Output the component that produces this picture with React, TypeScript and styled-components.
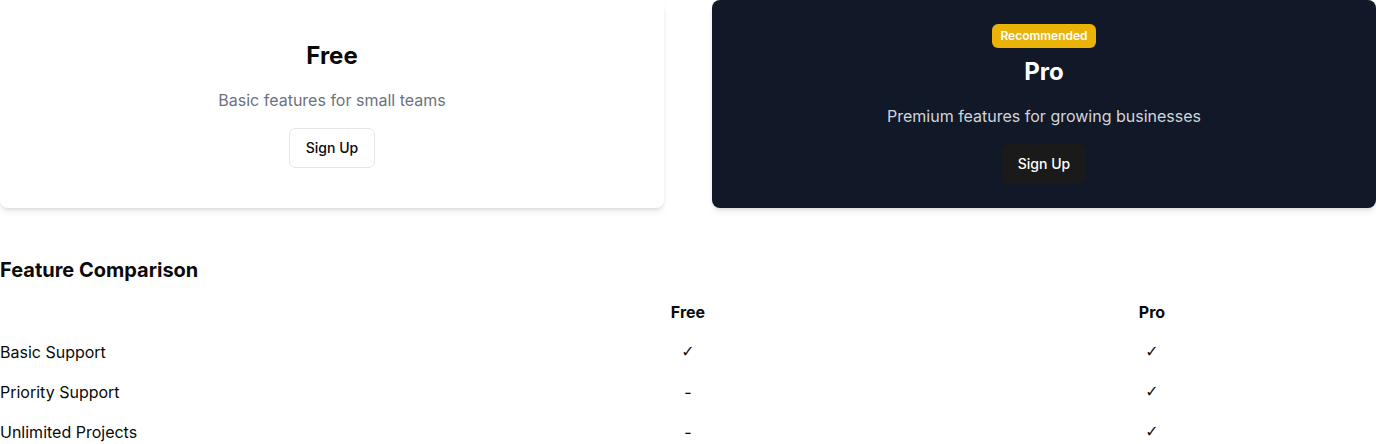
import React from "react";
import styled, { createGlobalStyle } from "styled-components";

const GlobalStyle = createGlobalStyle`
  html, body {
    margin: 0;
    padding: 0;
    background: #ffffff;
  }
  body {
    font-family: Inter, "Noto Sans", sans-serif;
    color: #0a0a0a;
  }
  * { box-sizing: border-box; }
`;

const Page = styled.div`
  width: 1376px;
`;

const CardGrid = styled.div`
  display: grid;
  grid-template-columns: 1fr 1fr;
  gap: 48px;
`;

const Card = styled.div<{ $dark?: boolean }>`
  display: flex;
  flex-direction: column;
  align-items: center;
  justify-content: center;
  padding: 24px;
  border-radius: 8px;
  text-align: center;
  background: ${(p) => (p.$dark ? "#111827" : "#ffffff")};
  color: ${(p) => (p.$dark ? "#ffffff" : "#0a0a0a")};
  box-shadow: 0 4px 6px -1px rgba(0, 0, 0, 0.1), 0 2px 4px -2px rgba(0, 0, 0, 0.1);
`;

const Badge = styled.span`
  display: inline-block;
  background: #eab308;
  color: #ffffff;
  font-size: 12px;
  line-height: 16px;
  font-weight: 600;
  padding: 4px 8px;
  border-radius: 6px;
  margin-bottom: 8px;
`;

const PlanTitle = styled.h3`
  margin: 0 0 16px;
  font-size: 24px;
  line-height: 32px;
  font-weight: 700;
`;

const PlanDesc = styled.p<{ $dark?: boolean }>`
  margin: 0 0 16px;
  font-size: 16px;
  line-height: 24px;
  color: ${(p) => (p.$dark ? "#d1d5db" : "#6b7280")};
`;

const SignUpButton = styled.button<{ $dark?: boolean }>`
  height: 40px;
  padding: 0 16px;
  font-family: Inter, "Noto Sans", sans-serif;
  font-size: 14px;
  line-height: 20px;
  font-weight: 500;
  border-radius: 6px;
  cursor: pointer;
  background: ${(p) => (p.$dark ? "#1a1a1a" : "#ffffff")};
  color: ${(p) => (p.$dark ? "#ffffff" : "#0a0a0a")};
  border: ${(p) => (p.$dark ? "none" : "1px solid #e5e7eb")};
`;

const Section = styled.section`
  margin-top: 48px;
`;

const SectionTitle = styled.h2`
  margin: 0 0 8px;
  font-size: 20px;
  line-height: 28px;
  font-weight: 700;
`;

const Table = styled.div`
  display: grid;
  grid-template-columns: 448px 480px 448px;
`;

const Cell = styled.div<{ $head?: boolean; $center?: boolean }>`
  height: 40px;
  display: flex;
  align-items: center;
  justify-content: ${(p) => (p.$center ? "center" : "flex-start")};
  font-size: 16px;
  line-height: 24px;
  font-weight: ${(p) => (p.$head ? 700 : 400)};
  color: #0a0a0a;
`;

const Mark = styled.span`
  font-family: "DejaVu Sans", sans-serif;
  font-size: 16px;
  color: #111111;
`;

const features: { name: string; free: boolean; pro: boolean }[] = [
  { name: "Basic Support", free: true, pro: true },
  { name: "Priority Support", free: false, pro: true },
  { name: "Unlimited Projects", free: false, pro: true },
];

export default function App() {
  return (
    <Page>
      <GlobalStyle />
      <CardGrid>
        <Card>
          <PlanTitle>Free</PlanTitle>
          <PlanDesc>Basic features for small teams</PlanDesc>
          <SignUpButton>Sign Up</SignUpButton>
        </Card>
        <Card $dark>
          <Badge>Recommended</Badge>
          <PlanTitle>Pro</PlanTitle>
          <PlanDesc $dark>Premium features for growing businesses</PlanDesc>
          <SignUpButton $dark>Sign Up</SignUpButton>
        </Card>
      </CardGrid>
      <Section>
        <SectionTitle>Feature Comparison</SectionTitle>
        <Table>
          <Cell $head />
          <Cell $head $center>Free</Cell>
          <Cell $head $center>Pro</Cell>
          {features.map((f) => (
            <React.Fragment key={f.name}>
              <Cell>{f.name}</Cell>
              <Cell $center>{f.free ? <Mark>✓</Mark> : "-"}</Cell>
              <Cell $center>{f.pro ? <Mark>✓</Mark> : "-"}</Cell>
            </React.Fragment>
          ))}
        </Table>
      </Section>
    </Page>
  );
}
